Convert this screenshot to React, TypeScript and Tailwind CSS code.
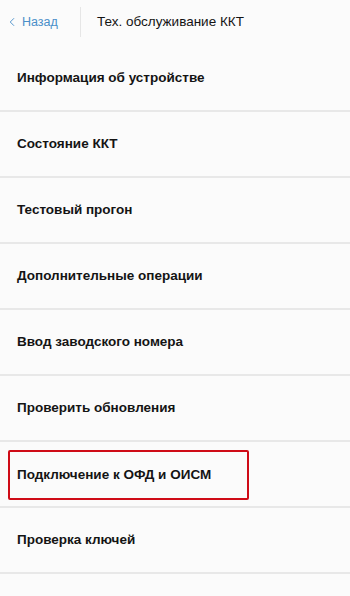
import { ChevronLeft } from "lucide-react";

const items = [
  "Информация об устройстве",
  "Состояние ККТ",
  "Тестовый прогон",
  "Дополнительные операции",
  "Ввод заводского номера",
  "Проверить обновления",
  "Подключение к ОФД и ОИСМ",
  "Проверка ключей",
];

export default function App() {
  return (
    <div className="h-[596px] w-[350px] overflow-hidden bg-[#fbfbfb] font-['Liberation_Sans',Arial,sans-serif] text-[#141414]">
      <header className="flex h-[44px] items-center">
        <button type="button" className="flex w-[80px] items-center pl-[5px] text-[12.5px] text-[#4a8fc9]">
          <ChevronLeft className="h-[14px] w-[14px]" strokeWidth={1.6} />
          <span className="ml-[3px]">Назад</span>
        </button>
        <div className="h-[30px] w-px bg-[#e6e6e6]" />
        <h1 className="pl-[16px] text-[13.5px]">Тех. обслуживание ККТ</h1>
      </header>
      <nav className="flex flex-col border-t-2 border-transparent">
        {items.map((label, i) => (
          <div key={label} className="flex h-[66px] items-center border-b-2 border-[#e8e8e8] px-[8px]">
            <div
              className={
                i === 6
                  ? "mt-[2px] flex h-[50px] w-[241px] items-center rounded-[2px] border-2 border-[#cf0c17] pl-[7px]"
                  : "flex h-[48px] items-center pl-[9px]"
              }
            >
              <span className="text-[13.5px] font-bold">{label}</span>
            </div>
          </div>
        ))}
      </nav>
    </div>
  );
}
